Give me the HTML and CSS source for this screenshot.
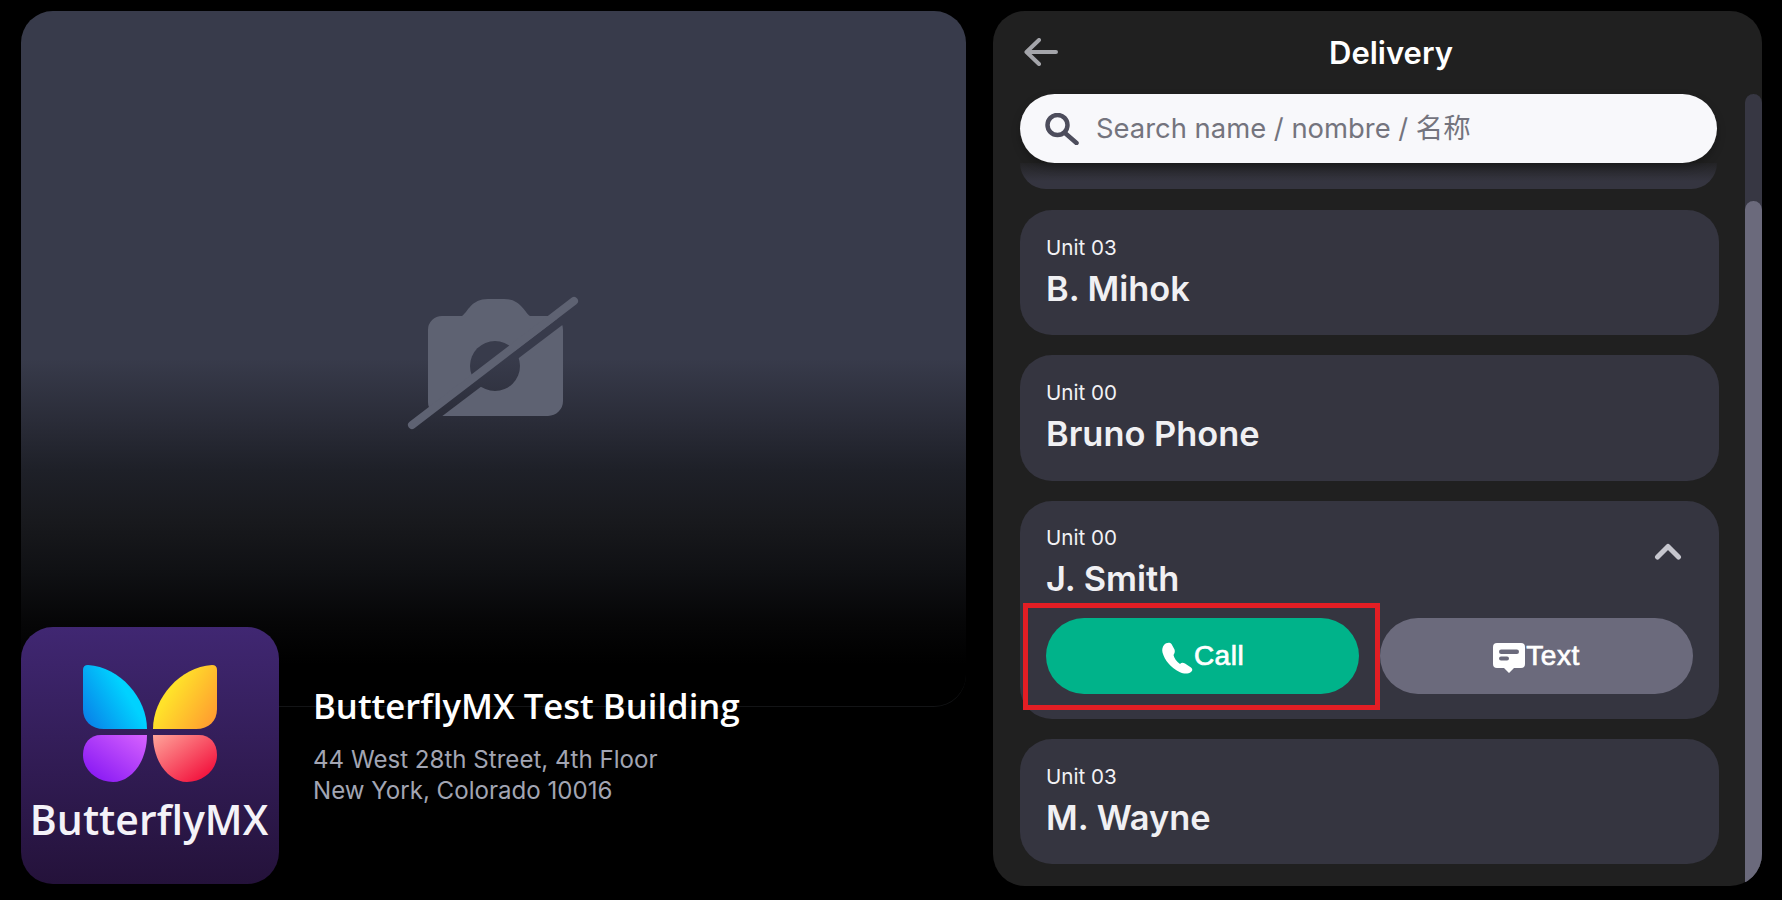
FILE: index.html
```html
<!DOCTYPE html>
<html lang="en">
<head>
    <meta charset="UTF-8">
    <title>Delivery</title>
    <link rel="stylesheet" href="styles.css">
</head>
<body>
    <div class="page">
        <div class="left">
            <div class="video">
                <svg class="no-camera" width="220" height="180" viewBox="0 0 220 180">
                    <mask id="camcut">
                        <rect width="220" height="180" fill="#000"/>
                        <path fill="#fff" d="M62 46h20c6-4 9-17 26-17h16c17 0 20 13 26 17h19a14 14 0 0 1 14 14v71a15 15 0 0 1-15 15H62a14 14 0 0 1-14-14V60a14 14 0 0 1 14-14z"/>
                        <circle cx="115" cy="96" r="25" fill="#000"/>
                        <line x1="20" y1="173" x2="206" y2="32" stroke="#000" stroke-width="8"/>
                    </mask>
                    <rect width="220" height="180" fill="#5e6272" mask="url(#camcut)"/>
                    <line x1="32" y1="155" x2="194" y2="31" stroke="#5e6272" stroke-width="8" stroke-linecap="round"/>
                </svg>
            </div>
            <div class="building">
                <div class="logo">
                    <svg width="180" height="150" viewBox="0 0 180 150">
                        <defs>
                            <linearGradient id="wing1" x1="0" y1="1" x2="1" y2="0.4">
                                <stop offset="0" stop-color="#0a78e6"/>
                                <stop offset="0.75" stop-color="#00d2ff"/>
                            </linearGradient>
                            <linearGradient id="wing2" x1="0" y1="0.4" x2="1" y2="1">
                                <stop offset="0.2" stop-color="#ffe22a"/>
                                <stop offset="1" stop-color="#ff9430"/>
                            </linearGradient>
                            <linearGradient id="wing3" x1="0" y1="1" x2="1" y2="0">
                                <stop offset="0" stop-color="#7f10f2"/>
                                <stop offset="1" stop-color="#d763ff"/>
                            </linearGradient>
                            <linearGradient id="wing4" x1="0" y1="0" x2="1" y2="1">
                                <stop offset="0" stop-color="#ffa59a"/>
                                <stop offset="0.9" stop-color="#f20d3a"/>
                            </linearGradient>
                        </defs>
                        <path fill="url(#wing1)" d="M28 15C60 17 87 48 87 79H44C31 79 23 71 23 59V20Q23 15 28 15Z"/>
                        <path fill="url(#wing2)" d="M152 15C120 17 93 48 93 79H136C149 79 157 71 157 59V20Q157 15 152 15Z"/>
                        <path fill="url(#wing3)" d="M87 85H41C30 85 23 93 23 105C23 120 37 132 53 132C71 132 87 112 87 85Z"/>
                        <path fill="url(#wing4)" d="M93 85H139C150 85 157 93 157 105C157 120 143 132 127 132C109 132 93 112 93 85Z"/>
                    </svg>
                    <div class="logo-name">ButterflyMX</div>
                </div>
                <div class="building-info">
                    <div class="building-name">ButterflyMX Test Building</div>
                    <div class="building-address">44 West 28th Street, 4th Floor<br>New York, Colorado 10016</div>
                </div>
            </div>
        </div>

        <div class="delivery">
            <div class="header">
                <svg class="back" width="34" height="28" viewBox="0 0 34 28" fill="none" stroke="#a4a5aa" stroke-width="4" stroke-linecap="round" stroke-linejoin="round">
                    <path d="M32 14H3M15 2 2.5 14 15 26"/>
                </svg>
                <div class="title">Delivery</div>
            </div>
            <div class="main">
                <div class="list">
                    <div class="search">
                        <svg width="34" height="32" viewBox="0 0 34 32" fill="none" stroke="#4d4d5c" stroke-width="4.5" stroke-linecap="round">
                            <circle cx="12.5" cy="12" r="10"/>
                            <path d="M20 20 31.500 30"/>
                        </svg>
                        <input type="text" placeholder="Search name / nombre / 名称">
                    </div>
                    <div class="card-peek"></div>

                    <div class="card">
                        <div class="unit">Unit 03</div>
                        <div class="name">B. Mihok</div>
                    </div>
                    <div class="card">
                        <div class="unit">Unit 00</div>
                        <div class="name">Bruno Phone</div>
                    </div>
                    <div class="card card-open">
                        <div class="card-top">
                            <div>
                                <div class="unit">Unit 00</div>
                                <div class="name">J. Smith</div>
                            </div>
                            <svg class="chevron" width="28" height="18" viewBox="0 0 28 18" fill="none" stroke="#c6c6ce" stroke-width="5" stroke-linecap="round" stroke-linejoin="round">
                                <path d="M3.500 15 14 4.500 24.500 15"/>
                            </svg>
                        </div>
                        <div class="actions">
                            <button class="btn btn-call">
                                <svg width="32" height="32" viewBox="0 0 32 32">
                                    <path fill="#fff" d="M3 3C5 .5 9 0 10.500 2L13.500 7.500C14.300 9.500 13.500 11.500 12.500 13C13 16 15.500 19.500 19 22C20.500 20.500 22 20.500 24 21.500L30 25.500C32 27 31.500 29 30 30C27 32 23 32 18.500 30C10 26 3.500 18 1.500 10.500C.8 7.500 1.500 5 3 3Z"/>
                                </svg>
                                Call
                            </button>
                            <button class="btn btn-text">
                                <svg width="32" height="30" viewBox="0 0 32 30">
                                    <path fill="#fff" d="M4 0H28A4 4 0 0 1 32 4V21A4 4 0 0 1 28 25H21L16 30 11 25H4A4 4 0 0 1 0 21V4A4 4 0 0 1 4 0Z"/>
                                    <rect x="6" y="6.500" width="20" height="4.500" rx="2.200" fill="#6b6a7c"/>
                                    <rect x="6" y="13.500" width="10" height="4" rx="2" fill="#6b6a7c"/>
                                </svg>
                                Text
                            </button>
                        </div>
                    </div>
                    <div class="card">
                        <div class="unit">Unit 03</div>
                        <div class="name">M. Wayne</div>
                    </div>
                </div>
                <div class="scrollbar">
                    <div class="thumb"></div>
                </div>
            </div>
        </div>
    </div>
</body>
</html>
```

FILE: styles.css
```css
* {
    box-sizing: border-box;
}
html, body {
    height: 100%;
}
body {
    margin: 0;
    background-color: #000;
    font-family: "Inter", "Noto Sans CJK SC", sans-serif;
    overflow: hidden;
}
.page {
    display: flex;
    height: 900px;
    padding: 11px 20px 14px 21px;
    gap: 27px;
}

/* left side */
.left {
    width: 945px;
    flex-shrink: 0;
}
.video {
    height: 696px;
    border-radius: 32px;
    border-bottom: 1px solid #131416;
    background: linear-gradient(#383b4b 0%, #383b4b 50%, #2a2c38 59%, #1e2028 66%, #18191d 73.5%, #0f1013 81%, #060607 88%, #000 94%);
    padding: 259px 0 0 359px;
}
.no-camera {
    display: block;
}
.building {
    display: flex;
    gap: 34px;
    margin-top: -80px;
}
.logo {
    width: 258px;
    height: 257px;
    border-radius: 32px;
    background: linear-gradient(#402772, #24123a);
    padding: 23px 0 0 39px;
}
.logo svg {
    display: block;
}
.logo-name {
    margin: -6px 0 0 -40px;
    width: 258px;
    text-align: center;
    font-family: "Open Sans", sans-serif;
    font-weight: 600;
    font-size: 41px;
    line-height: 50px;
    color: #f4f2f8;
}
.building-info {
    padding-top: 56px;
}
.building-name {
    font-family: "Open Sans", sans-serif;
    font-weight: 600;
    font-size: 34.7px;
    line-height: 46px;
    color: #fff;
}
.building-address {
    margin-top: 15px;
    font-size: 24.1px;
    line-height: 31px;
    color: #a2a5b3;
}

/* right side */
.delivery {
    flex: 1;
    height: 875px;
    background-color: #202020;
    border-radius: 32px;
    overflow: hidden;
    display: flex;
    flex-direction: column;
}
.header {
    height: 83px;
    flex-shrink: 0;
    display: flex;
    align-items: center;
    padding: 0 0 1px 31px;
}
.back {
    flex-shrink: 0;
}
.title {
    flex: 1;
    padding-right: 38px;
    text-align: center;
    font-weight: 600;
    font-size: 31px;
    color: #fff;
}
.main {
    flex: 1;
    display: flex;
    padding-left: 27px;
    min-height: 0;
}
.list {
    width: 699px;
    flex-shrink: 0;
}
.search {
    width: 697px;
    height: 69px;
    border-radius: 35px;
    background-color: #f8f8fb;
    display: flex;
    align-items: center;
    gap: 15px;
    padding-left: 25px;
    box-shadow: 0 4px 8px rgba(0, 0, 0, 0.25);
    position: relative;
}
.search svg {
    flex-shrink: 0;
}
.search input {
    flex: 1;
    border: none;
    outline: none;
    background: none;
    margin-bottom: 2px;
    font-family: "Inter", "Noto Sans CJK SC", sans-serif;
    font-size: 27.4px;
    color: #74747e;
}
.search input::placeholder {
    color: #74747e;
    opacity: 1;
}
.card-peek {
    height: 26px;
    margin-bottom: 21px;
    width: 697px;
    border-radius: 0 0 32px 32px;
    background: linear-gradient(#232325, #353540 70%);
}
.card {
    background-color: #353540;
    border-radius: 32px;
    padding: 24.5px 26px 0;
    height: 125.3px;
    margin-bottom: 20px;
}
.card-open {
    height: 218.5px;
}
.card-top {
    display: flex;
    justify-content: space-between;
}
.chevron {
    margin: 16.5px 11px 0 0;
}
.unit {
    font-size: 20.6px;
    line-height: 26px;
    color: #f2f2f5;
}
.name {
    font-weight: 600;
    font-size: 34.4px;
    line-height: 44px;
    margin-top: 6px;
    color: #f0f0f3;
}
.actions {
    display: flex;
    gap: 21px;
    margin-top: 16.5px;
}
.btn {
    width: 314px;
    height: 76px;
    border: none;
    border-radius: 38px;
    color: #fff;
    font-family: "Liberation Sans", Arial, sans-serif;
    font-size: 28px;
    letter-spacing: 0.5px;
    -webkit-text-stroke: 0.7px #fff;
    display: flex;
    align-items: center;
    justify-content: center;
    gap: 1px;
    position: relative;
}
.btn svg {
    margin-top: 4px;
}
.btn-call {
    background-color: #00b38a;
}
.btn-text {
    background-color: #6b6a7c;
}
/* red highlight round the call button */
.btn-call::after {
    content: "";
    position: absolute;
    top: -15px;
    right: -21px;
    bottom: -16px;
    left: -23px;
    border: 5px solid #e31e24;
}
.scrollbar {
    width: 17px;
    margin-left: 26px;
    flex-shrink: 0;
    background-color: #373743;
    border-radius: 17px 17px 0 0;
    padding-top: 107px;
}
.thumb {
    height: 100%;
    background-color: #6b6a7c;
    border-radius: 17px 17px 0 0;
}
```
